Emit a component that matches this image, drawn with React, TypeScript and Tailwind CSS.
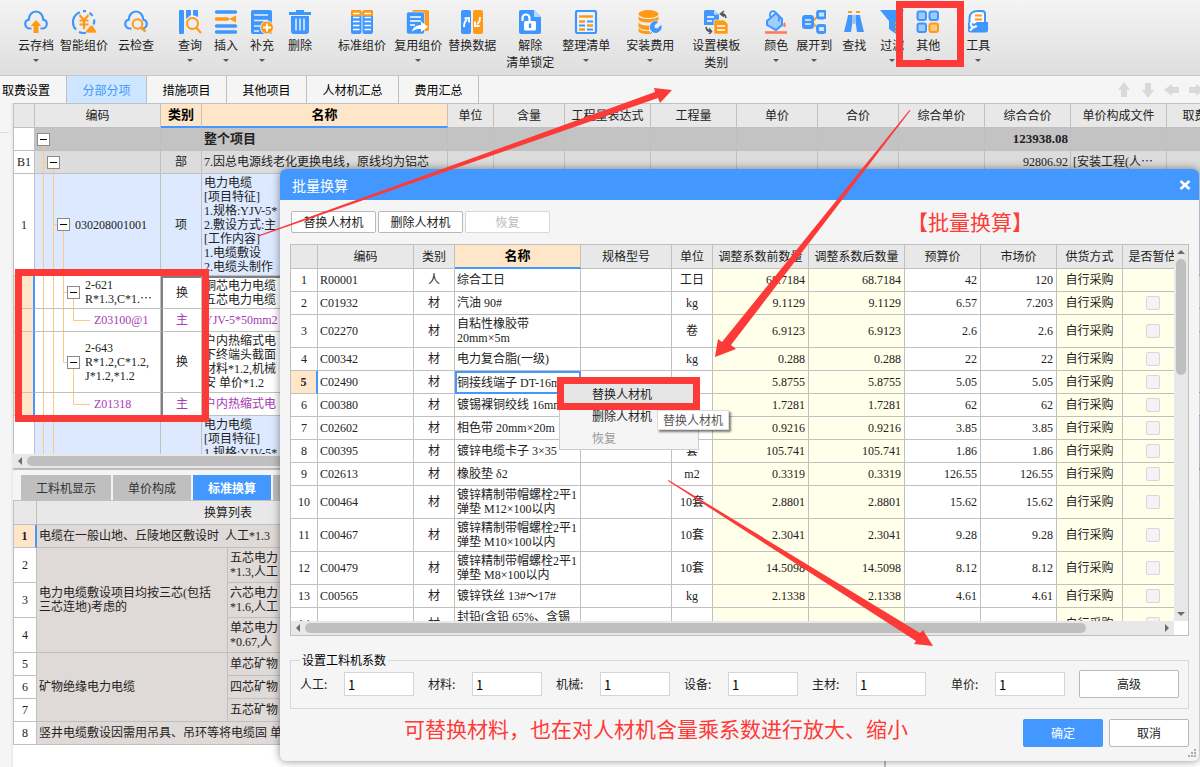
import { ReactNode } from "react";
import clsx from "clsx";

const B = "#3f97fd";
const O = "#ff9a17";

const cloud =
  "M7.5 18.5H6C3.2 18.500 1.200 16.500 1.200 14c0-2.300 1.500-4 3.600-4.400C5 4.800 8 1.500 12 1.500s7 3.300 7.200 8.100c2.100.400 3.600 2.100 3.600 4.400 0 2.500-2 4.500-4.800 4.500h-1.500";

const icons: Record<string, ReactNode> = {
  archive: (
    <>
      <path d={cloud} fill="none" stroke={B} strokeWidth="2.2" />
      <path d="M12 10l5.500 6h-3v7h-5v-7h-3z" fill={O} />
    </>
  ),
  smart: (
    <>
      <path
        d="M8 2.200A10.500 10.500 0 0 0 4 19.500M7 22a11 11 0 0 0 7 .800M11 1.200h3M17.500 2.800a10.500 10.500 0 0 1 3 3M22 9.500a10 10 0 0 1-.300 5"
        fill="none"
        stroke={B}
        strokeWidth="2.200"
      />
      <path
        d="M7.500 5l4.500 5 4.500-5M12 10v9M7.500 10.500h9M7.500 14.500h9"
        fill="none"
        stroke={O}
        strokeWidth="2.200"
      />
      <path d="M15 23a1.500 1.500 0 0 1-1-2.500l4-4.500c1-1 2-1 3 0l3 4.500a1.500 1.500 0 0 1-1 2.500z" fill={O} stroke="#eee" strokeWidth=".600" />
    </>
  ),
  check: (
    <>
      <path d={cloud} fill="none" stroke={B} strokeWidth="2.200" />
      <circle cx="13.500" cy="14" r="6.500" fill="#eee" />
      <circle cx="13.500" cy="14" r="4.800" fill="none" stroke={O} strokeWidth="2" />
      <path d="M17 17.500l4.500 4" stroke={O} strokeWidth="2.400" />
    </>
  ),
  query: (
    <>
      <rect x="1" y="0" width="5" height="24" rx="1" fill={B} />
      <path d="M8 0h5v5l-5 4zM15 0h5v7l-5-2z" fill={B} />
      <circle cx="14.500" cy="13.500" r="5.500" fill="none" stroke={O} strokeWidth="2" />
      <path d="M18.500 18l4.500 5" stroke={O} strokeWidth="2.200" />
    </>
  ),
  insert: (
    <>
      <path d="M2.500 2h19M2.500 16h19M2.500 22h19" stroke={B} strokeWidth="3.400" strokeLinecap="round" />
      <path d="M2.500 9h11" stroke={O} strokeWidth="3.400" strokeLinecap="round" />
      <path d="M15 9l7-3.500v7z" fill={O} />
    </>
  ),
  supply: (
    <>
      <rect x="1" y="0" width="21" height="24" rx="2" fill={B} />
      <path d="M4 5h14M4 10.500h14M4 16h6M4 21h5" stroke="#e4effc" strokeWidth="1.700" />
      <circle cx="17" cy="17.500" r="6.500" fill={O} stroke="#f0f0f0" />
      <path d="M17 13.500v8M13 17.500h8" stroke="#fff" strokeWidth="2" />
    </>
  ),
  remove: (
    <>
      <path d="M1 2h7V0h8v2h7v3H1zM3 6h18v15a3 3 0 0 1-3 3H6a3 3 0 0 1-3-3z" fill={B} />
      <path d="M8 8.500v12M12 8.500v12M16 8.500v12" stroke="#e8f1fc" strokeWidth="1.500" />
    </>
  ),
  standard: (
    <>
      <rect x="1" y="0" width="10.500" height="24" rx="2" fill={B} />
      <rect x="12.500" y="0" width="10.500" height="24" rx="2" fill={B} />
      <path d="M1 6V2a2 2 0 0 1 2-2h6.500a2 2 0 0 1 2 2v4zM12.500 6V2a2 2 0 0 1 2-2H21a2 2 0 0 1 2 2v4z" fill={O} />
      <path
        d="M3 3.500h6.500M14.500 3.500H21M3 7.500h6.500M14.500 7.500H21M3 11.500h6.500M14.500 11.500H21M3 15.500h6.500M14.500 15.500H21M3 19.500h6.500M14.500 19.500H21"
        stroke="#fff"
        strokeWidth="1.500"
      />
    </>
  ),
  reuse: (
    <>
      <rect x="6" y="0" width="17" height="21" rx="2" fill={O} />
      <rect x="0.500" y="2" width="18" height="22" rx="2" fill={B} stroke="#eee" strokeWidth=".6" />
      <path d="M4 7h11M4 11h11M4 15h5" stroke="#fff" strokeWidth="1.600" />
      <path d="M6 21.500c1-4.500 5-6.500 9-6.500v-3.500l7 5.300-7 5.200v-3c-4 0-6 .500-9 2.500z" fill="#fff" />
    </>
  ),
  replace: (
    <>
      <rect x="1" y="0" width="10" height="24" rx="2" fill={B} />
      <rect x="13" y="0" width="10" height="24" rx="2" fill={O} />
      <path d="M4 17c0-4 .500-6 3-7M4.500 8.500L9 8v4.500M20 7c0 4-.500 6-3 7M15 11.500V16h4.500" fill="none" stroke="#fff" strokeWidth="1.900" />
    </>
  ),
  unlock: (
    <>
      <path d="M1 2a2 2 0 0 1 2-2h13l7 7v15a2 2 0 0 1-2 2H3a2 2 0 0 1-2-2z" fill={B} />
      <path d="M16 0v7h7z" fill="#b9d9fc" />
      <path d="M4.500 11V8a3.500 3.500 0 0 1 7 0v3" fill="none" stroke="#fff" strokeWidth="2.200" />
      <rect x="6" y="11" width="12" height="9.500" rx="1.500" fill="#fff" />
      <path d="M12 13.500v4.500" stroke={B} strokeWidth="2.400" />
    </>
  ),
  list: (
    <>
      <rect x="2" y="1" width="20" height="22" rx="1.500" fill="#edf5fe" stroke={B} strokeWidth="2.200" />
      <path d="M5 6.500h14M5 11.500h6M13 15.500h6M5 19.500h6" stroke={O} strokeWidth="2.600" />
      <path d="M13 11.500h6M5 15.500h6M13 19.500h6" stroke={B} strokeWidth="1.800" />
    </>
  ),
  cost: (
    <>
      <ellipse cx="10.500" cy="4" rx="10" ry="4" fill={O} />
      <path
        d="M.500 6c1 4 19 4 20 0v3.500c-1 4-19 4-20 0zM.500 12c1 4 11 4.300 13 2.500L11 20c-6 0-10-1.500-10.500-3.500zM.500 18c1.500 2.500 6 3 11 3l1 3C6 24.500.500 23 .500 21z"
        fill={O}
      />
      <circle cx="17.500" cy="17" r="6.500" fill="#eee" />
      <path
        d="M17.500 11.500a5.500 5.500 0 1 0 5.500 4l-3.500 3.500-3-.500-.500-3 3.500-3.500a6 6 0 0 0-2-.500zM12 24l3.500-3.500"
        fill={B}
        stroke={B}
        strokeWidth="1"
      />
    </>
  ),
  template: (
    <>
      <path d="M0 1.500A1.500 1.500 0 0 1 1.500 0H10l5 4.500V15H0z" fill={B} />
      <path d="M10 0v4.500h5z" fill="#bddcff" />
      <path d="M3 7h7M3 11h5" stroke="#fff" strokeWidth="1.400" />
      <path d="M10 10h10l4 4v10H10z" fill={O} stroke="#eee" strokeWidth=".600" />
      <path d="M13 16h8M13 20h8" stroke="#fff" strokeWidth="1.500" />
      <path d="M20 1l-3.500 3L20 6.500M17 4c3-.500 4.500 1 5 4M2 17c.500 3 2 4.500 5 4.500M5 18.500l2.500 3L5 24" fill="none" stroke="#555" strokeWidth="1.600" />
    </>
  ),
  color: (
    <>
      <path d="M3 11l9-8 6 6v6l-6 5-9-5z" fill="#9fcdfc" stroke={B} strokeWidth="2" />
      <path d="M6 7V4a3 3 0 0 1 5-2l4 4.500v5" fill="none" stroke={B} strokeWidth="1.800" />
      <path d="M20.500 12c2 3 1.500 5 0 5s-2-2 0-5z" fill="#ff7a52" />
      <path d="M1 22.500h22" stroke="#ff7a5c" strokeWidth="2.600" />
    </>
  ),
  expand: (
    <>
      <path d="M10 12l7-7M10 12l7 7.500" fill="none" stroke={O} strokeWidth="1.800" />
      <rect x="0" y="5" width="12" height="14" rx="3" fill={B} />
      <path d="M3 10h6M3 14h6" stroke="#e4effc" strokeWidth="1.600" />
      <rect x="15.500" y="1" width="8" height="7" rx="2" fill="#cfe5fd" stroke={B} strokeWidth="2.800" />
      <rect x="15.500" y="15.500" width="8" height="7" rx="2" fill="#cfe5fd" stroke={B} strokeWidth="2.800" />
    </>
  ),
  find: (
    <>
      <path d="M6 2h4M14 2h4" stroke={O} strokeWidth="2" />
      <path d="M6 5h4.500v7L9 22H2l3-12zM13.500 5H18l1 5 3 12h-7l-1.500-10z" fill={B} />
      <path d="M11.500 5h1v9h-1z" fill={B} />
    </>
  ),
  filter: (
    <>
      <path d="M0 0h24l-8 11v13l-7-5v-8z" fill={B} />
      <path d="M15 13h8M15 17h8M15 21h8" stroke={O} strokeWidth="2" />
    </>
  ),
  other: (
    <>
      <rect x="1.500" y="1.500" width="8.500" height="8.500" rx="2" fill="#9ccbfb" stroke={B} strokeWidth="2" />
      <rect x="13.500" y="1.500" width="8.500" height="8.500" rx="2" fill="#9ccbfb" stroke={B} strokeWidth="2" />
      <rect x="1.500" y="13.500" width="8.500" height="8.500" rx="2" fill="#9ccbfb" stroke={B} strokeWidth="2" />
      <rect x="13.500" y="13.500" width="8.500" height="8.500" rx="2" fill="#ffc97f" stroke={O} strokeWidth="2" />
    </>
  ),
  tools: (
    <>
      <path d="M3.500 14V8c0-4 3-7 8-7H16a3 3 0 0 1 3 3v9" fill="#f8fbff" stroke={B} strokeWidth="2" />
      <path d="M9 5.500h7M9 9.500h7" stroke={O} strokeWidth="1.800" />
      <path d="M2 13l2-2 4 3 3-2h11v8a2.500 2.500 0 0 1-2.500 2.500h-15A2.500 2.500 0 0 1 2 20z" fill={B} />
      <path d="M4 20.500l4-4M6.500 11.500a3 3 0 1 0 4 4" fill="none" stroke="#fff" strokeWidth="2.200" />
    </>
  ),
};

type Tool = { icon: string; label: string; sub?: string; menu?: boolean; gap: string };

const tools: Tool[] = [
  { icon: "archive", label: "云存档", menu: true, gap: "ml-[18px]" },
  { icon: "smart", label: "智能组价", gap: "ml-1.5" },
  { icon: "check", label: "云检查", gap: "ml-2.5" },
  { icon: "query", label: "查询", menu: true, gap: "ml-6" },
  { icon: "insert", label: "插入", menu: true, gap: "ml-3" },
  { icon: "supply", label: "补充", menu: true, gap: "ml-3" },
  { icon: "remove", label: "删除", gap: "ml-3.5" },
  { icon: "standard", label: "标准组价", gap: "ml-[26px]" },
  { icon: "reuse", label: "复用组价", menu: true, gap: "ml-2" },
  { icon: "replace", label: "替换数据", gap: "ml-1.5" },
  { icon: "unlock", label: "解除", sub: "清单锁定", gap: "ml-2.5" },
  { icon: "list", label: "整理清单", menu: true, gap: "ml-2" },
  { icon: "cost", label: "安装费用", menu: true, gap: "ml-4" },
  { icon: "template", label: "设置模板", sub: "类别", gap: "ml-[18px]" },
  { icon: "color", label: "颜色", menu: true, gap: "ml-6" },
  { icon: "expand", label: "展开到", menu: true, gap: "ml-2" },
  { icon: "find", label: "查找", gap: "ml-2.5" },
  { icon: "filter", label: "过滤", menu: true, gap: "ml-3.5" },
  { icon: "other", label: "其他", menu: true, gap: "ml-3" },
  { icon: "tools", label: "工具", menu: true, gap: "ml-[26px]" },
];

function Toolbar() {
  return (
    <div className="flex h-[76px] shrink-0 items-start border-b border-[#c8c8c8] bg-linear-to-b from-[#f4f4f4] to-[#dedede] pt-2.5">
      {tools.map((t) => (
        <button key={t.icon} className={clsx("flex shrink-0 flex-col items-center whitespace-nowrap", t.gap)}>
          <svg viewBox="0 0 24 24" className="size-6">
            {icons[t.icon]}
          </svg>
          <span className="mt-0.5 leading-[17px]">{t.label}</span>
          {t.sub && <span className="leading-[17px]">{t.sub}</span>}
          {t.menu && (
            <svg viewBox="0 0 6 3" className="mt-1.5 h-[3px] w-1.5">
              <path d="M0 0h6L3 3z" fill="#555" />
            </svg>
          )}
        </button>
      ))}
    </div>
  );
}

const tabs = [
  { label: "取费设置", w: "w-[67px] pl-0.5 text-left" },
  { label: "分部分项", w: "w-20", active: true },
  { label: "措施项目", w: "w-20" },
  { label: "其他项目", w: "w-20" },
  { label: "人材机汇总", w: "w-[92px]" },
  { label: "费用汇总", w: "w-20" },
];

function TabBar() {
  return (
    <div className="flex h-[27px] shrink-0 bg-[#f5f5f5]">
      {tabs.map((t) => (
        <button
          key={t.label}
          className={clsx(
            "shrink-0 border-r border-[#bfbfbf]",
            t.w,
            t.active ? "bg-[#cce7ff] text-[#4298ff]" : "text-black",
          )}
        >
          {t.label}
        </button>
      ))}
      <div className="-mr-1 ml-auto flex items-center gap-2 text-[#d9d9d9]">
        {["rotate-0", "rotate-180", "-rotate-90", "rotate-90"].map((r) => (
          <svg key={r} viewBox="0 0 16 16" className={clsx("size-4", r)}>
            <path d="M8 0l6 8h-3v7H5V8H2z" fill="currentColor" />
          </svg>
        ))}
      </div>
    </div>
  );
}

function Toggle() {
  return (
    <button
      aria-label="折叠"
      className="relative flex size-[13px] shrink-0 items-center justify-center border border-[#8a8a8a] bg-white"
    >
      <span className="h-px w-[7px] bg-black" />
    </button>
  );
}

type SheetRow = {
  no?: string;
  h: string;
  bg: string;
  indent: string;
  guide: string;
  toggle?: boolean;
  code?: ReactNode;
  kind?: string;
  name: string;
  total?: string;
  file?: string;
  picked?: boolean;
  purple?: boolean;
  strong?: boolean;
};

const sheetRows: SheetRow[] = [
  { h: "h-[23px]", bg: "bg-[#c3c3c3]", indent: "pl-0.5", guide: "M8.500 16V23", toggle: true, name: "整个项目", total: "123938.08", strong: true },
  { no: "B1", h: "h-[23px]", bg: "bg-[#dcdcdc]", indent: "pl-3", guide: "M8.500 0V23M8.500 11.500H13M18.500 17V23", toggle: true, kind: "部", name: "7.因总电源线老化更换电线，原线均为铝芯", total: "92806.92", file: "[安装工程(人⋯" },
  { no: "1", h: "h-[102px]", bg: "bg-[#dce9fe]", indent: "pl-[22px]", guide: "M8.500 0V102M18.500 0V102M18.500 50.500H23M28.500 56V102", toggle: true, code: "030208001001", kind: "项", name: "电力电缆\n[项目特征]\n1.规格:YJV-5*\n2.敷设方式:主\n[工作内容]\n1.电缆敷设\n2.电缆头制作" },
  { h: "h-[33px]", bg: "bg-white", indent: "pl-8", guide: "M8.500 0V33M18.500 0V33M28.500 0V33M28.500 16.500H33M38.500 22V33", toggle: true, code: <>2-621<br />R*1.3,C*1.⋯</>, kind: "换", name: "铜芯电力电缆\n五芯电力电缆", picked: true },
  { h: "h-[23px]", bg: "bg-white", indent: "pl-[59px]", guide: "M8.500 0V23M18.500 0V23M28.500 0V23M38.500 0V11.500H55", code: "Z03100@1", kind: "主", name: "YJV-5*50mm2", picked: true, purple: true },
  { h: "h-[61px]", bg: "bg-white", indent: "pl-8", guide: "M8.500 0V61M18.500 0V61M28.500 0V30.500H33M38.500 36V61", toggle: true, code: <>2-643<br />R*1.2,C*1.2,<br />J*1.2,*1.2</>, kind: "换", name: "户内热缩式电\n下终端头截面\n材料*1.2,机械\n安 单价*1.2", picked: true },
  { h: "h-[23px]", bg: "bg-white", indent: "pl-[59px]", guide: "M8.500 0V23M18.500 0V23M38.500 0V11.500H55", code: "Z01318", kind: "主", name: "户内热缩式电", picked: true, purple: true },
  { h: "h-[102px]", bg: "bg-[#dce9fe]", indent: "pl-[22px]", guide: "M8.500 0V102M18.500 0V102", name: "电力电缆\n[项目特征]\n1.规格:YJV-5*\n2.敷设方式:主\n[工作内容]\n1.电缆敷设\n2.电缆头制作" },
];

const cell = "border-r border-b border-[#c0c0c0] p-0";

function Sheet() {
  return (
    <div className="flex h-[351px] shrink-0 overflow-hidden">
      <table className="w-[1234px] shrink-0 table-fixed border-separate border-spacing-0 border-t border-l border-[#c0c0c0] font-['Liberation_Serif','Noto_Sans_CJK_SC',sans-serif] leading-[14px] text-[#222]">
        <colgroup>
          <col className="w-[21px]" />
          <col className="w-[126px]" />
          <col className="w-[41px]" />
          <col className="w-[246px]" />
          <col className="w-[46px]" />
          <col className="w-[71px]" />
          <col className="w-[86px]" />
          <col className="w-[86px]" />
          <col className="w-[81px]" />
          <col className="w-[81px]" />
          <col className="w-[86px]" />
          <col className="w-[86px]" />
          <col className="w-24" />
          <col className="w-20" />
        </colgroup>
        <thead>
          <tr className="h-6 bg-[#e8e8e8]">
            {["", "编码", "类别", "名称", "单位", "含量", "工程量表达式", "工程量", "单价", "合价", "综合单价", "综合合价", "单价构成文件", "取费专业"].map((h, i) => (
              <th
                key={i}
                className={clsx(
                  "border-r p-0 whitespace-nowrap",
                  i === 2 || i === 3
                    ? "border-b-2 border-r-[#c0c0c0] border-b-[#4298ff] bg-[#ffe6c9] text-[13px] font-bold text-black"
                    : "border-b border-[#c0c0c0] font-normal",
                )}
              >
                {h}
              </th>
            ))}
          </tr>
        </thead>
        <tbody>
          {sheetRows.map((r, i) => (
            <tr key={i} className={clsx(r.h, r.bg, r.purple && "text-[#a63ab5]")}>
              <td
                className={clsx(
                  "border-b border-b-[#c0c0c0] p-0 text-center",
                  r.picked ? "border-r-2 border-r-[#4298ff] bg-[#ffe6c9]" : "border-r border-r-[#c0c0c0] bg-white",
                )}
              >
                {r.no}
              </td>
              <td className={clsx(cell, "relative")}>
                <svg className="absolute inset-0 h-full w-full">
                  <path d={r.guide} fill="none" stroke="#ffc982" />
                </svg>
                <div className={clsx("flex items-center gap-[5px] whitespace-nowrap", r.indent)}>
                  {r.toggle && <Toggle />}
                  <span className="relative">{r.code}</span>
                </div>
              </td>
              <td
                className={clsx(
                  "border-r border-b border-r-[#c0c0c0] border-b-[#c0c0c0] p-0 text-center",
                  r.picked && "border-l-2 border-l-[#808080]",
                  i === 3 && "border-t-2 border-t-[#808080]",
                )}
              >
                {r.kind}
              </td>
              <td
                className={clsx(
                  cell,
                  "overflow-hidden pl-0.5 whitespace-pre",
                  i === 3 && "border-t-2 border-t-[#808080]",
                  r.strong && "text-[13px] font-bold",
                )}
              >
                {r.name}
              </td>
              {[4, 5, 6, 7, 8, 9, 10].map((c) => (
                <td key={c} className={cell} />
              ))}
              <td className={clsx(cell, "pr-0.5 text-right", r.strong && "text-[13px] font-bold")}>{r.total}</td>
              <td className={clsx(cell, "pl-0.5 whitespace-nowrap")}>{r.file}</td>
              <td className={cell} />
            </tr>
          ))}
        </tbody>
      </table>
    </div>
  );
}

function Arrow({ turn }: { turn: string }) {
  return (
    <svg viewBox="0 0 8 8" className={clsx("size-2 shrink-0", turn)}>
      <path d="M0 6l4-4 4 4z" fill="#6b6b73" />
    </svg>
  );
}

const rules: { no: number; h: string; text?: string; span?: number; wide?: boolean; option?: string }[] = [
  { no: 1, h: "h-[23px]", text: "电缆在一般山地、丘陵地区敷设时  人工*1.3", wide: true },
  { no: 2, h: "h-[35px]", text: "电力电缆敷设项目均按三芯(包括\n三芯连地)考虑的", span: 3, option: "五芯电力\n*1.3,人工" },
  { no: 3, h: "h-[35px]", option: "六芯电力\n*1.6,人工" },
  { no: 4, h: "h-[35px]", option: "单芯电力\n*0.67,人" },
  { no: 5, h: "h-[23px]", text: "矿物绝缘电力电缆", span: 3, option: "单芯矿物" },
  { no: 6, h: "h-[23px]", option: "四芯矿物" },
  { no: 7, h: "h-[23px]", option: "五芯矿物" },
  { no: 8, h: "h-[23px]", text: "竖井电缆敷设因需用吊具、吊环等将电缆固 单", wide: true },
];

function LowerPanel() {
  return (
    <div className="flex min-h-0 flex-1 flex-col border-t-2 border-[#bcbcbc] bg-[#f5f5f5]">
      <div className="mt-[5px] flex h-[25px] shrink-0 gap-0.5 pl-2">
        <button className="w-[90px] bg-[#bfbfbf] text-[#333]">工料机显示</button>
        <button className="w-[78px] bg-[#bfbfbf] text-[#333]">单价构成</button>
        <button className="w-[78px] bg-[#4298ff] font-bold text-white">标准换算</button>
        <span className="w-10 bg-[#bfbfbf]" />
      </div>
      <div className="flex min-h-0 flex-1 overflow-hidden">
        <div className="w-[873px] shrink-0 border-r-2 border-[#bcbcbc] bg-white">
          <table className="w-[407px] table-fixed border-separate border-spacing-0 border-t border-l border-[#c0c0c0] font-['Liberation_Serif','Noto_Sans_CJK_SC',sans-serif] leading-[14px] text-[#222]">
            <colgroup>
              <col className="w-[23px]" />
              <col className="w-[191px]" />
              <col />
            </colgroup>
            <thead>
              <tr className="h-6 bg-[#e8e8e8]">
                <th className={cell} />
                <th colSpan={2} className={clsx(cell, "font-normal")}>
                  换算列表
                </th>
              </tr>
            </thead>
            <tbody>
              {rules.map((r) => (
                <tr key={r.no} className={clsx(r.h, "bg-[#dfd9d7]")}>
                  <td
                    className={clsx(
                      "border-b border-b-[#c0c0c0] p-0 text-center",
                      r.no === 1
                        ? "border-r-2 border-r-[#4298ff] bg-[#ffe6c9] font-bold"
                        : "border-r border-r-[#c0c0c0] bg-white",
                    )}
                  >
                    {r.no}
                  </td>
                  {r.text && (
                    <td rowSpan={r.span} colSpan={r.wide ? 2 : 1} className={clsx(cell, "pl-0.5 whitespace-pre")}>
                      {r.text}
                    </td>
                  )}
                  {r.option && <td className={clsx(cell, "pl-0.5 whitespace-pre")}>{r.option}</td>}
                </tr>
              ))}
            </tbody>
          </table>
        </div>
        <div className="flex-1 bg-white" />
      </div>
    </div>
  );
}

const materials = [
  ["R00001", "人", "综合工日", "工日", "68.7184", "42", "120"],
  ["C01932", "材", "汽油 90#", "kg", "9.1129", "6.57", "7.203"],
  ["C02270", "材", "自粘性橡胶带\n20mm×5m", "卷", "6.9123", "2.6", "2.6"],
  ["C00342", "材", "电力复合脂(一级)", "kg", "0.288", "22", "22"],
  ["C02490", "材", "铜接线端子 DT-16mm", "", "5.8755", "5.05", "5.05"],
  ["C00380", "材", "镀锡裸铜绞线 16mm", "", "1.7281", "62", "62"],
  ["C02602", "材", "相色带 20mm×20m", "", "0.9216", "3.85", "3.85"],
  ["C00395", "材", "镀锌电缆卡子 3×35", "套", "105.741", "1.86", "1.86"],
  ["C02613", "材", "橡胶垫 δ2", "m2", "0.3319", "126.55", "126.55"],
  ["C00464", "材", "镀锌精制带帽螺栓2平1\n弹垫 M12×100以内", "10套", "2.8801", "15.62", "15.62"],
  ["C00467", "材", "镀锌精制带帽螺栓2平1\n弹垫 M10×100以内", "10套", "2.3041", "9.28", "9.28"],
  ["C00479", "材", "镀锌精制带帽螺栓2平1\n弹垫 M8×100以内", "10套", "14.5098", "8.12", "8.12"],
  ["C00565", "材", "镀锌铁丝 13#～17#", "kg", "2.1338", "4.61", "4.61"],
  ["", "材", "封铅(含铅 65%、含锡\n35%)", "", "", "", ""],
];

function MaterialTable() {
  return (
    <div className="border border-[#bfbfbf] bg-white">
      <div className="flex h-[376px]">
        <div className="min-w-0 flex-1 overflow-hidden">
          <table className="w-[892px] table-fixed border-separate border-spacing-0 font-['Liberation_Serif','Noto_Sans_CJK_SC',sans-serif] leading-[14px] text-[#222]">
            <colgroup>
              <col className="w-[27px]" />
              <col className="w-24" />
              <col className="w-[41px]" />
              <col className="w-[126px]" />
              <col className="w-[91px]" />
              <col className="w-[41px]" />
              <col className="w-24" />
              <col className="w-24" />
              <col className="w-[76px]" />
              <col className="w-[76px]" />
              <col className="w-[66px]" />
              <col className="w-[60px]" />
            </colgroup>
            <thead>
              <tr className="h-6 bg-[#e8e8e8]">
                {["", "编码", "类别", "名称", "规格型号", "单位", "调整系数前数量", "调整系数后数量", "预算价", "市场价", "供货方式", "是否暂估"].map((h, i) => (
                  <th
                    key={i}
                    className={clsx(
                      "border-r p-0 whitespace-nowrap",
                      i === 3
                        ? "border-b-2 border-r-[#c0c0c0] border-b-[#4298ff] bg-[#ffe6c9] text-[13px] font-bold text-black"
                        : "border-b border-[#c0c0c0] font-normal",
                    )}
                  >
                    {h}
                  </th>
                ))}
              </tr>
            </thead>
            <tbody>
              {materials.map(([code, kind, name, unit, qty, budget, market], i) => (
                <tr key={i} className={name.includes("\n") ? "h-[33px]" : "h-[23px]"}>
                  <td
                    className={clsx(
                      "border-b border-b-[#c0c0c0] p-0 text-center",
                      i === 4
                        ? "border-r-2 border-r-[#4298ff] bg-[#ffe6c9] font-bold"
                        : "border-r border-r-[#c0c0c0]",
                    )}
                  >
                    {i + 1}
                  </td>
                  <td className={clsx(cell, "pl-0.5")}>{code}</td>
                  <td className={clsx(cell, "text-center")}>{kind}</td>
                  <td
                    className={clsx(
                      "overflow-hidden p-0 whitespace-pre",
                      i === 4 ? "border-2 border-[#4298ff]" : "border-r border-b border-[#c0c0c0] pl-0.5",
                    )}
                  >
                    {name}
                  </td>
                  <td className={cell} />
                  <td className={clsx(cell, "text-center")}>{unit}</td>
                  <td className={clsx(cell, "bg-[#ffffea] pr-[3px] text-right")}>{qty}</td>
                  <td className={clsx(cell, "bg-[#ffffea] pr-[3px] text-right")}>{qty}</td>
                  <td className={clsx(cell, "pr-[3px] text-right")}>{budget}</td>
                  <td className={clsx(cell, "pr-[3px] text-right")}>{market}</td>
                  <td className={clsx(cell, "bg-[#ffffea] text-center")}>自行采购</td>
                  <td className={clsx(cell, "bg-[#ffffea] text-center")}>
                    {i > 0 && (
                      <input
                        type="checkbox"
                        aria-label="是否暂估"
                        className="mx-auto block size-3.5 appearance-none rounded-xs border border-[#d6d6dc] bg-[#f3f3f5]"
                      />
                    )}
                  </td>
                </tr>
              ))}
            </tbody>
          </table>
        </div>
        <div className="flex w-3.5 flex-col items-center bg-[#e8e8e8] py-[3px]">
          <Arrow turn="rotate-0" />
          <div className="mt-[3px] h-[116px] w-2.5 rounded-full bg-[#bfbfbf]" />
          <span className="flex-1" />
          <Arrow turn="rotate-180" />
        </div>
      </div>
      <div className="flex h-3.5 pr-3.5">
        <div className="flex flex-1 items-center bg-[#e8e8e8] px-[3px]">
          <Arrow turn="-rotate-90" />
          <div className="ml-[3px] h-2.5 w-[89%] rounded-full bg-[#bfbfbf]" />
          <span className="flex-1" />
          <Arrow turn="rotate-90" />
        </div>
      </div>
    </div>
  );
}

function Factor({ id, label }: { id: string; label: string }) {
  return (
    <div className="flex items-center">
      <label htmlFor={id} className="w-11 text-[#222]">
        {label}:
      </label>
      <input
        id={id}
        defaultValue="1"
        className="h-6 w-[70px] border border-[#d5d5d5] bg-white px-[3px] text-[13px] text-black outline-none"
      />
    </div>
  );
}

function Dialog() {
  return (
    <div
      role="dialog"
      aria-label="批量换算"
      className="absolute top-[169px] right-px left-[280px] rounded-md bg-[#f5f5f5] pb-3.5 shadow-[0_0_8px_rgba(0,0,0,0.45)]"
    >
      <div className="flex h-[31px] items-center justify-between rounded-t-md bg-[#4298ff] pr-2 pl-3 text-white">
        <h2 className="text-sm">批量换算</h2>
        <button aria-label="关闭">
          <svg viewBox="0 0 12 12" className="size-3">
            <path d="M1.500 2l9 8M10.500 2l-9 8" stroke="#fff" strokeWidth="2.600" />
          </svg>
        </button>
      </div>
      <div className="px-2.5">
        <div className="flex gap-0.5 py-[11px] pl-px">
          <button className="h-[22px] w-[85px] rounded-xs border border-[#b8b8b8] bg-white text-[#222]">替换人材机</button>
          <button className="h-[22px] w-[85px] rounded-xs border border-[#b8b8b8] bg-white text-[#222]">删除人材机</button>
          <button disabled className="h-[22px] w-[85px] rounded-xs border border-[#d8d8d8] bg-white text-[#bbb]">
            恢复
          </button>
        </div>
        <MaterialTable />
        <fieldset className="mt-4 h-[57px] border border-[#d8d8d8] px-[9px] pt-0.5">
          <legend className="px-0.5 leading-4 text-black">设置工料机系数</legend>
          <div className="flex items-center gap-3.5">
            <Factor id="labor" label="人工" />
            <Factor id="material" label="材料" />
            <Factor id="machine" label="机械" />
            <Factor id="equipment" label="设备" />
            <Factor id="main" label="主材" />
            <div className="ml-auto flex items-center gap-3.5">
              <Factor id="price" label="单价" />
              <button className="h-7 w-[100px] rounded-xs border border-[#b8b8b8] bg-white text-[#222]">高级</button>
            </div>
          </div>
        </fieldset>
        <div className="mt-2.5 flex items-start justify-end gap-1.5">
          <p className="mr-auto ml-[114px] text-[21px] leading-[18px] text-[#ff3b38]">
            可替换材料，也在对人材机含量乘系数进行放大、缩小
          </p>
          <button className="h-7 w-20 rounded-xs bg-[#4298ff] text-white">确定</button>
          <button className="h-7 w-20 rounded-xs border border-[#b8b8b8] bg-white text-[#222]">取消</button>
        </div>
      </div>
      <svg viewBox="0 0 8 8" className="absolute right-[3px] bottom-1 size-2">
        <path d="M6 0h2v2H6zM3 3h2v2H3zM6 3h2v2H6zM0 6h2v2H0zM3 6h2v2H3zM6 6h2v2H6z" fill="#aaa" />
      </svg>
      <p className="absolute top-10 right-[166px] text-[21px] leading-6 text-[#ff3b38]">【批量换算】</p>
      <div className="absolute top-[210px] left-[279px] flex w-[140px] flex-col border border-[#ccc] bg-[#f5f5f5] pt-[3px] text-[#222]">
        <button className="h-[22px] bg-[#e6e6e6] pl-8 text-left">替换人材机</button>
        <button className="h-[22px] pl-8 text-left">删除人材机</button>
        <button className="h-[22px] pl-8 text-left text-[#999]">恢复</button>
      </div>
      <div
        role="tooltip"
        className="absolute top-[241px] left-[377px] border border-[#ddd] bg-white px-[5px] leading-[18px] text-[#555] shadow-[2px_2px_2px_rgba(0,0,0,0.5)]"
      >
        替换人材机
      </div>
    </div>
  );
}

function Marks() {
  return (
    <svg className="pointer-events-none absolute inset-0 h-full w-full">
      <g fill="none" stroke="#fc3a38" strokeWidth="7">
        <rect x="899.500" y="4.500" width="61" height="59" />
        <rect x="18.500" y="272.500" width="187" height="146" />
        <rect x="560.500" y="380.500" width="136" height="26" />
      </g>
      <g fill="#fc3a38">
        <path d="M258 235.500L655 92l-1-4 18 2-12 13-2-5L258 236.800z" />
        <path d="M909.500 110L722 342l-4-3-3 18 21-8-5-4L910.500 110.500z" />
        <path d="M668.500 480l251.500 153 3-3 10 16-19-2 2-3L668 481z" />
      </g>
    </svg>
  );
}

export default function App() {
  return (
    <div
      lang="zh-CN"
      className="relative flex h-screen flex-col overflow-hidden bg-[#f5f5f5] font-['Noto_Sans_CJK_SC',sans-serif] text-xs text-[#222]"
    >
      <Toolbar />
      <TabBar />
      <div className="flex min-h-0 flex-1">
        <div className="w-[13px] shrink-0 border-r-2 border-[#ececec] pt-[29px]">
          <div className="h-px w-[9px] bg-[#ddd]" />
        </div>
        <div className="flex min-w-0 flex-1 flex-col">
          <Sheet />
          <div className="flex h-3.5 shrink-0 items-center bg-[#e8e8e8] px-[3px]">
            <Arrow turn="-rotate-90" />
            <div className="ml-[3px] h-2.5 w-[70%] rounded-full bg-[#bfbfbf]" />
          </div>
          <LowerPanel />
        </div>
      </div>
      <Dialog />
      <Marks />
    </div>
  );
}
